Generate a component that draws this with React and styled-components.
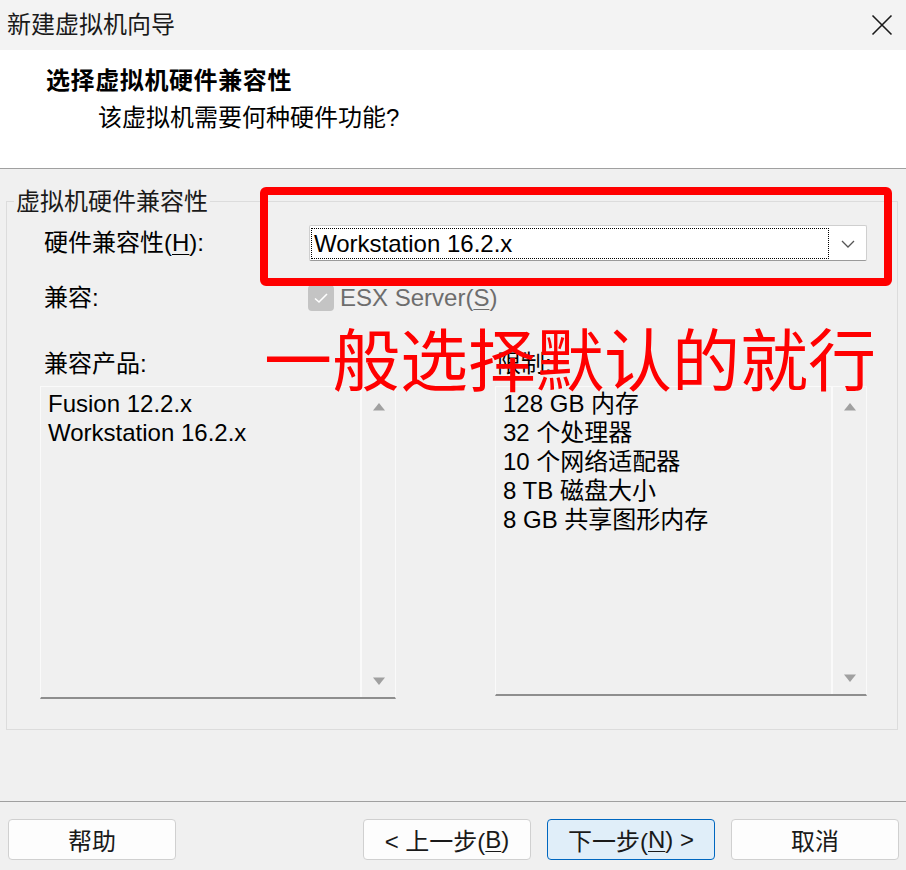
import React from 'react';
import styled, { createGlobalStyle } from 'styled-components';

const GlobalStyle = createGlobalStyle`
  html, body {
    margin: 0;
    padding: 0;
    background: #f0f0f0;
  }
  body {
    font-family: "Liberation Sans", "Noto Sans CJK SC", sans-serif;
  }
`;

const Dialog = styled.div`
  position: relative;
  width: 906px;
  height: 870px;
  display: flex;
  flex-direction: column;
  background: #f0f0f0;
  color: #000;
  font-size: 24px;
  overflow: hidden;
`;

const TitleBar = styled.div`
  height: 50px;
  box-sizing: border-box;
  display: flex;
  align-items: center;
  justify-content: space-between;
  padding: 0 13px 6px 7px;
  background: #f3f3f3;
  color: #1a1a1a;
  font-size: 24px;
`;

const CloseIcon = styled.svg`
  margin-top: 6px;
`;

const Header = styled.div`
  height: 119px;
  background: #fff;
  border-bottom: 1px solid #a0a0a0;
  display: flex;
  flex-direction: column;
  padding: 16px 0 0 46px;
  box-sizing: border-box;
`;

const HeaderTitle = styled.div`
  font-weight: bold;
  font-size: 24px;
  line-height: 30px;
  letter-spacing: 0.6px;
`;

const HeaderSub = styled.div`
  margin: 7px 0 0 52px;
  font-size: 24px;
  line-height: 30px;
`;

const Main = styled.div`
  flex: 1;
`;

const Group = styled.fieldset`
  margin: 18px 8px 0 6px;
  padding: 0 0 30px 0;
  border: 1px solid #dcdcdc;
  min-width: 0;
`;

const Legend = styled.legend`
  margin-left: 7px;
  padding: 2px 2px 0;
  font-size: 24px;
  line-height: 26px;
  color: #1a1a1a;
`;

const GroupBody = styled.div`
  padding-left: 33px;
`;

const Row = styled.div`
  display: flex;
  align-items: center;
  margin-top: ${p => p.$top}px;
  height: ${p => p.$h}px;
`;

const Label = styled.div`
  width: ${p => p.$w || 269}px;
  padding-left: ${p => p.$pad || 4}px;
  box-sizing: border-box;
  line-height: 26px;
  white-space: nowrap;
`;

const Combo = styled.div`
  width: 558px;
  height: 36px;
  box-sizing: border-box;
  background: #fff;
  border: 1px solid #cfcfcf;
  border-bottom-color: #9a9a9a;
  border-radius: 2px;
  display: flex;
  align-items: stretch;
  padding: 2px 0 1px 1px;
`;

const ComboValue = styled.div`
  flex: 1;
  border: 1px dotted #000;
  display: flex;
  align-items: center;
  padding-left: 2px;
  line-height: 1;
`;

const ComboArrow = styled.div`
  width: 37px;
  display: flex;
  align-items: center;
  justify-content: center;
`;

const Check = styled.div`
  width: 26px;
  height: 26px;
  margin-left: -1px;
  border-radius: 4px;
  background: #c4c4c4;
  display: flex;
  align-items: center;
  justify-content: center;
`;

const CheckLabel = styled.span`
  margin-left: 6px;
  color: #6d6d6d;
`;

const Lists = styled.div`
  display: flex;
  gap: 99px;
  margin-top: 9px;
`;

const ListBox = styled.div`
  width: ${p => p.$w}px;
  height: ${p => p.$h}px;
  box-sizing: border-box;
  display: flex;
  border: 1px solid #fafafa;
  border-bottom: 2px solid #8e8e8e;
  background: #f0f0f0;
`;

const ListItems = styled.div`
  flex: 1;
  padding: 2px 0 0 ${p => p.$pad}px;
  line-height: 29px;
  border-right: 2px solid #fafafa;
`;

const ScrollBar = styled.div`
  width: 33px;
  display: flex;
  flex-direction: column;
  justify-content: space-between;
  align-items: center;
  padding: 15px 0 11px;
`;

const Footer = styled.div`
  height: 69px;
  border-top: 1px solid #a0a0a0;
  display: flex;
  justify-content: space-between;
  padding: 17px 7px 0 8px;
  box-sizing: border-box;
`;

const ButtonGroup = styled.div`
  display: flex;
  gap: 16px;
`;

const Button = styled.div`
  width: 168px;
  height: 41px;
  box-sizing: border-box;
  border: 1px solid ${p => (p.$primary ? '#0067c0' : '#d0d0d0')};
  border-radius: 4px;
  background: ${p => (p.$primary ? '#e0eef9' : '#fdfdfd')};
  display: flex;
  align-items: center;
  justify-content: center;
  font-size: 24px;
  color: #1a1a1a;
  white-space: nowrap;
`;

const Key = styled.u`
  text-underline-offset: 3px;
  text-decoration-thickness: 1px;
`;

const RedBox = styled.div`
  position: absolute;
  left: 260px;
  top: 187px;
  width: 632px;
  height: 99px;
  box-sizing: border-box;
  border: 8px solid #ff0000;
  border-radius: 6px;
`;

const RedNote = styled.div`
  position: absolute;
  left: 264px;
  top: 319px;
  font-family: "Noto Sans CJK SC", sans-serif;
  font-size: 68px;
  line-height: 76px;
  color: #ff0000;
  white-space: nowrap;
`;

const Arrow = ({ up }) => (
  <svg width="14" height="9" viewBox="0 0 14 9">
    <path d={up ? 'M1 8.5 L7 1 L13 8.5 Z' : 'M1 0.5 L7 8 L13 0.5 Z'} fill="#a0a0a0" />
  </svg>
);

const App = () => (
  <Dialog>
    <GlobalStyle />
    <TitleBar>
      <span>新建虚拟机向导</span>
      <CloseIcon width="22" height="22" viewBox="0 0 22 22">
        <path d="M1.5 1.5 L20.5 20.5 M20.5 1.5 L1.5 20.5" stroke="#1a1a1a" strokeWidth="1.6" />
      </CloseIcon>
    </TitleBar>
    <Header>
      <HeaderTitle>选择虚拟机硬件兼容性</HeaderTitle>
      <HeaderSub>该虚拟机需要何种硬件功能?</HeaderSub>
    </Header>
    <Main>
      <Group>
        <Legend>虚拟机硬件兼容性</Legend>
        <GroupBody>
          <Row $top={10} $h={36}>
            <Label>硬件兼容性(<Key>H</Key>):</Label>
            <Combo>
              <ComboValue>Workstation 16.2.x</ComboValue>
              <ComboArrow>
                <svg width="14" height="8" viewBox="0 0 14 8">
                  <path d="M1 1 L7 7 L13 1" fill="none" stroke="#555" strokeWidth="1.3" />
                </svg>
              </ComboArrow>
            </Combo>
          </Row>
          <Row $top={24} $h={26}>
            <Label>兼容:</Label>
            <Check>
              <svg width="16" height="12" viewBox="0 0 16 12">
                <path d="M2 6.5 L6 10 L14 2" fill="none" stroke="#fff" strokeWidth="1.6" />
              </svg>
            </Check>
            <CheckLabel>ESX Server(<Key>S</Key>)</CheckLabel>
          </Row>
          <Row $top={40} $h={26}>
            <Label $w={455}>兼容产品:</Label>
            <Label $w={200} $pad={2}>限制:</Label>
          </Row>
          <Lists>
            <ListBox $w={356} $h={313}>
              <ListItems $pad={7}>
                <div>Fusion 12.2.x</div>
                <div>Workstation 16.2.x</div>
              </ListItems>
              <ScrollBar>
                <Arrow up />
                <Arrow />
              </ScrollBar>
            </ListBox>
            <ListBox $w={372} $h={310}>
              <ListItems $pad={7}>
                <div>128 GB 内存</div>
                <div>32 个处理器</div>
                <div>10 个网络适配器</div>
                <div>8 TB 磁盘大小</div>
                <div>8 GB 共享图形内存</div>
              </ListItems>
              <ScrollBar>
                <Arrow up />
                <Arrow />
              </ScrollBar>
            </ListBox>
          </Lists>
        </GroupBody>
      </Group>
    </Main>
    <Footer>
      <Button>帮助</Button>
      <ButtonGroup>
        <Button>&lt; 上一步(<Key>B</Key>)</Button>
        <Button $primary>下一步(<Key>N</Key>) &gt;</Button>
        <Button>取消</Button>
      </ButtonGroup>
    </Footer>
    <RedBox />
    <RedNote>一般选择默认的就行</RedNote>
  </Dialog>
);

export default App;
